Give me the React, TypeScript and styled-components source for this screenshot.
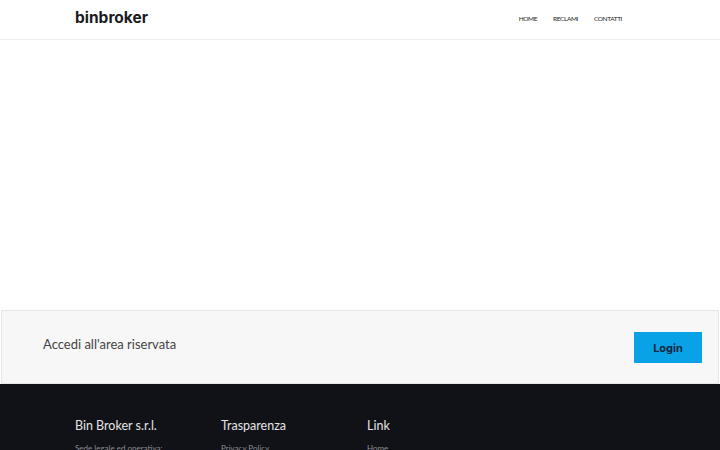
import React from 'react';
import styled, { createGlobalStyle } from 'styled-components';

const GlobalStyle = createGlobalStyle`
    html, body {
        margin: 0;
        padding: 0;
        background: #fff;
    }

    body {
        font-family: Lato, 'Open Sans', sans-serif;
        -webkit-font-smoothing: antialiased;
    }

    * {
        box-sizing: border-box;
    }
`;

const navItems = ['Home', 'Reclami', 'Contatti'];

const footerColumns = [
    { title: 'Bin Broker s.r.l.', items: ['Sede legale ed operativa:'] },
    { title: 'Trasparenza', items: ['Privacy Policy'] },
    { title: 'Link', items: ['Home'] },
];

export default function App() {
    return (
        <Page>
            <GlobalStyle />
            <Header>
                <Container>
                    <Logo>binbroker</Logo>
                    <Nav>
                        {navItems.map((item) => (
                            <NavLink key={item} href='#'>
                                {item}
                            </NavLink>
                        ))}
                    </Nav>
                </Container>
            </Header>

            <Main />

            <LoginBand>
                <LoginText>Accedi all'area riservata</LoginText>
                <LoginButton type='button'>Login</LoginButton>
            </LoginBand>

            <Footer>
                <FooterGrid>
                    {footerColumns.map((col) => (
                        <FooterColumn key={col.title}>
                            <FooterTitle>{col.title}</FooterTitle>
                            {col.items.map((item) => (
                                <FooterItem key={item}>{item}</FooterItem>
                            ))}
                        </FooterColumn>
                    ))}
                </FooterGrid>
            </Footer>
        </Page>
    );
}

const Page = styled.div`
    display: flex;
    flex-direction: column;
    min-height: 100vh;
`;

const Header = styled.header`
    height: 40px;
    border-bottom: 1px solid #ececec;
    background: #fff;
`;

const Container = styled.div`
    width: 570px;
    height: 100%;
    margin: 0 auto;
    display: flex;
    align-items: center;
    justify-content: space-between;
`;

const Logo = styled.a`
    font-family: Inter, sans-serif;
    font-weight: 700;
    font-size: 15.5px;
    color: #1b1b1f;
    margin-top: -4px;
`;

const Nav = styled.nav`
    display: flex;
    gap: 16px;
    margin-right: 23px;
    margin-top: -2px;
`;

const NavLink = styled.a`
    font-family: Lato, sans-serif;
    font-size: 6.5px;
    letter-spacing: -0.4px;
    text-transform: uppercase;
    text-decoration: none;
    color: #222;
`;

const Main = styled.main`
    height: 270px;
`;

const LoginBand = styled.section`
    height: 74px;
    margin: 0 1px;
    border: 1px solid #e6e6e6;
    background: #f7f7f7;
    display: flex;
    align-items: center;
    justify-content: space-between;
    padding: 0 16px 0 41px;
`;

const LoginText = styled.p`
    margin: 0 0 6px;
    font-family: Lato, sans-serif;
    font-weight: 400;
    font-size: 13px;
    color: #444;
`;

const LoginButton = styled.button`
    width: 68px;
    height: 31px;
    margin-top: 1px;
    border: none;
    background: #0aa2e6;
    color: #0d2740;
    font-family: Inter, sans-serif;
    font-weight: 700;
    font-size: 11px;
    cursor: pointer;
`;

const Footer = styled.footer`
    flex: 1;
    background: #111217;
    padding-top: 34px;
`;

const FooterGrid = styled.div`
    width: 570px;
    margin: 0 auto;
    display: grid;
    grid-template-columns: repeat(3, 146px);
`;

const FooterColumn = styled.div`
    display: flex;
    flex-direction: column;
    gap: 10px;
`;

const FooterTitle = styled.h4`
    margin: 0;
    font-family: Lato, sans-serif;
    font-weight: 400;
    font-size: 12.5px;
    color: #e4e4e4;
`;

const FooterItem = styled.span`
    font-family: Lato, sans-serif;
    font-size: 8px;
    color: #8c8c93;
`;
